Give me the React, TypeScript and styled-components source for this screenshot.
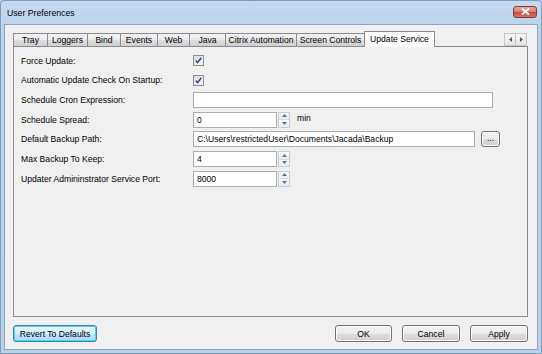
import React from "react";
import styled, { createGlobalStyle } from "styled-components";

const Global = createGlobalStyle`
  html, body { margin: 0; padding: 0; background: #b9d1ea; }
  body { font-family: "Liberation Sans", Arial, sans-serif; font-size: 8.6px; color: #000; }
  * { box-sizing: border-box; }
`;

const Window = styled.div`
  width: 542px;
  height: 354px;
  display: flex;
  flex-direction: column;
  background: linear-gradient(#c6d9ef 0px, #bcd3ec 24px, #b9d1ea 100%);
  border: 1px solid #7f9db9;
  border-radius: 4px 4px 0 0;
`;

const TitleBar = styled.div`
  height: 23px;
  flex: none;
  display: flex;
  align-items: center;
  padding: 0 4px 0 6px;
`;

const Title = styled.div`
  flex: 1;
  font-size: 8.7px;
  color: #000;
  padding-top: 1px;
`;

const CloseButton = styled.div`
  width: 24px;
  height: 12px;
  margin-top: -2px;
  border: 1px solid #7a3b3b;
  border-radius: 3px;
  background: linear-gradient(#e5a89f 0%, #d67c70 45%, #c44f40 55%, #d6735f 100%);
  display: flex;
  align-items: center;
  justify-content: center;
`;

const Client = styled.div`
  flex: 1;
  margin: 0 3px 3px 3px;
  background: #f0f0f0;
  border: 1px solid #8ea4c1;
  padding: 6px 9px 0 8px;
  display: flex;
  flex-direction: column;
`;

const TabStrip = styled.div`
  height: 16px;
  display: flex;
  align-items: flex-end;
  position: relative;
  z-index: 1;
  margin-bottom: -1px;
`;

const Tab = styled.div<{ $w: number; $active?: boolean }>`
  width: ${(p) => p.$w + 1}px;
  height: ${(p) => (p.$active ? 16 : 14)}px;
  margin-right: -1px;
  border: 1px solid #898c95;
  border-bottom: ${(p) => (p.$active ? "none" : "1px solid #898c95")};
  background: ${(p) =>
    p.$active ? "#ffffff" : "linear-gradient(#f2f2f2 0%, #ebebeb 50%, #dddddd 51%, #cfcfcf 100%)"};
  display: flex;
  align-items: center;
  justify-content: center;
  padding-bottom: ${(p) => (p.$active ? 2 : 0)}px;
  white-space: nowrap;
  font-size: 8.6px;
`;

const ScrollArrows = styled.div`
  margin-left: auto;
  margin-right: 1px;
  align-self: center;
  display: flex;
`;

const ArrowButton = styled.div`
  width: 12px;
  height: 13px;
  border: 1px solid #c5c5c5;
  background: linear-gradient(#f6f6f6, #e6e6e6);
  display: flex;
  align-items: center;
  justify-content: center;
  margin-left: -1px;
`;

const Panel = styled.div`
  height: 271px;
  flex: none;
  border: 1px solid #898c95;
  background: #f0f0f0;
  padding: 4px 7px 0 7px;
`;

const Form = styled.div`
  display: grid;
  grid-template-columns: 172px auto;
  grid-auto-rows: 19.65px;
  align-items: center;
`;

const Label = styled.div`
  white-space: nowrap;
`;

const Control = styled.div`
  display: flex;
  align-items: center;
`;

const Check = styled.div`
  width: 11px;
  height: 11px;
  border: 1px solid #8f8f8f;
  background: linear-gradient(135deg, #dcdcdc, #f6f6f6);
  display: flex;
  align-items: center;
  justify-content: center;
`;

const TextBox = styled.div<{ $w: number }>`
  width: ${(p) => p.$w}px;
  height: 16px;
  border: 1px solid #abadb3;
  border-top-color: #abadb3;
  background: #fff;
  padding: 0 3px;
  display: flex;
  align-items: center;
  white-space: nowrap;
  overflow: hidden;
`;

const SpinWrap = styled.div`
  display: flex;
  align-items: center;
`;

const SpinButtons = styled.div`
  width: 12px;
  height: 16px;
  margin-left: 1px;
  display: flex;
  flex-direction: column;
  border: 1px solid #c9ced6;
  background: #f3f5f8;
`;

const SpinHalf = styled.div<{ $top?: boolean }>`
  flex: 1;
  display: flex;
  align-items: center;
  justify-content: center;
  border-bottom: ${(p) => (p.$top ? "1px solid #d8dde5" : "none")};
  background: linear-gradient(#fbfcfd, #e9edf2);
`;

const Unit = styled.span`
  margin-left: 7px;
  margin-top: -4px;
`;

const Button = styled.div<{ $w: number; $focus?: boolean }>`
  width: ${(p) => p.$w}px;
  height: 17px;
  border: 1px solid ${(p) => (p.$focus ? "#3c7fb1" : "#707070")};
  border-radius: 3px;
  background: ${(p) =>
    p.$focus
      ? "linear-gradient(#eaf6fd 0%, #d9f0fc 50%, #bee6fd 51%, #a7d9f5 100%)"
      : "linear-gradient(#f2f2f2 0%, #ebebeb 50%, #dddddd 51%, #cfcfcf 100%)"};
  box-shadow: inset 0 0 0 1px ${(p) => (p.$focus ? "#48d4f2" : "#fcfcfc")};
  display: flex;
  align-items: center;
  justify-content: center;
  white-space: nowrap;
`;

const BrowseButton = styled(Button)`
  margin-left: 6px;
  height: 16px;
  padding-bottom: 3px;
`;

const Footer = styled.div`
  display: flex;
  align-items: center;
  margin-top: 8px;
  gap: 10px;
`;

const Spacer = styled.div`
  flex: 1;
`;

const CheckMark = () => (
  <svg width="7" height="7" viewBox="0 0 7 7">
    <path d="M0.8 3.6 L2.6 5.6 L6.3 0.8" fill="none" stroke="#2c4a9e" strokeWidth="1.5" />
  </svg>
);

const Tri = ({ up }: { up: boolean }) => (
  <svg width="5" height="3" viewBox="0 0 5 3">
    <path d={up ? "M0 3 L2.5 0 L5 3 Z" : "M0 0 L2.5 3 L5 0 Z"} fill="#5a6f8c" />
  </svg>
);

const Spin = ({ value }: { value: string }) => (
  <SpinWrap>
    <TextBox $w={84}>{value}</TextBox>
    <SpinButtons>
      <SpinHalf $top>
        <Tri up />
      </SpinHalf>
      <SpinHalf>
        <Tri up={false} />
      </SpinHalf>
    </SpinButtons>
  </SpinWrap>
);

const tabs = [
  { label: "Tray", w: 34 },
  { label: "Loggers", w: 40 },
  { label: "Bind", w: 33 },
  { label: "Events", w: 37 },
  { label: "Web", w: 32 },
  { label: "Java", w: 36 },
  { label: "Citrix Automation", w: 71 },
  { label: "Screen Controls", w: 68 },
  { label: "Update Service", w: 70, active: true },
];

export default function App() {
  return (
    <>
      <Global />
      <Window>
        <TitleBar>
          <Title>User Preferences</Title>
          <CloseButton>
            <svg width="9" height="7" viewBox="0 0 9 7">
              <path d="M1 0.5 L8 6.5 M8 0.5 L1 6.5" stroke="#fff" strokeWidth="1.8" />
            </svg>
          </CloseButton>
        </TitleBar>
        <Client>
          <TabStrip>
            {tabs.map((t) => (
              <Tab key={t.label} $w={t.w} $active={t.active}>
                {t.label}
              </Tab>
            ))}
            <ScrollArrows>
              <ArrowButton>
                <svg width="3" height="5" viewBox="0 0 3 5">
                  <path d="M3 0 L0 2.5 L3 5 Z" fill="#4a5a70" />
                </svg>
              </ArrowButton>
              <ArrowButton>
                <svg width="3" height="5" viewBox="0 0 3 5">
                  <path d="M0 0 L3 2.5 L0 5 Z" fill="#4a5a70" />
                </svg>
              </ArrowButton>
            </ScrollArrows>
          </TabStrip>
          <Panel>
            <Form>
              <Label>Force Update:</Label>
              <Control>
                <Check>
                  <CheckMark />
                </Check>
              </Control>
              <Label>Automatic Update Check On Startup:</Label>
              <Control>
                <Check>
                  <CheckMark />
                </Check>
              </Control>
              <Label>Schedule Cron Expression:</Label>
              <Control>
                <TextBox $w={300} />
              </Control>
              <Label>Schedule Spread:</Label>
              <Control>
                <Spin value="0" />
                <Unit>min</Unit>
              </Control>
              <Label>Default Backup Path:</Label>
              <Control>
                <TextBox $w={282}>C:\Users\restrictedUser\Documents\Jacada\Backup</TextBox>
                <BrowseButton $w={19}>...</BrowseButton>
              </Control>
              <Label>Max Backup To Keep:</Label>
              <Control>
                <Spin value="4" />
              </Control>
              <Label>Updater Admininstrator Service Port:</Label>
              <Control>
                <Spin value="8000" />
              </Control>
            </Form>
          </Panel>
          <Footer>
            <Button $w={84} $focus>
              Revert To Defaults
            </Button>
            <Spacer />
            <Button $w={57}>OK</Button>
            <Button $w={58}>Cancel</Button>
            <Button $w={58}>Apply</Button>
          </Footer>
        </Client>
      </Window>
    </>
  );
}
